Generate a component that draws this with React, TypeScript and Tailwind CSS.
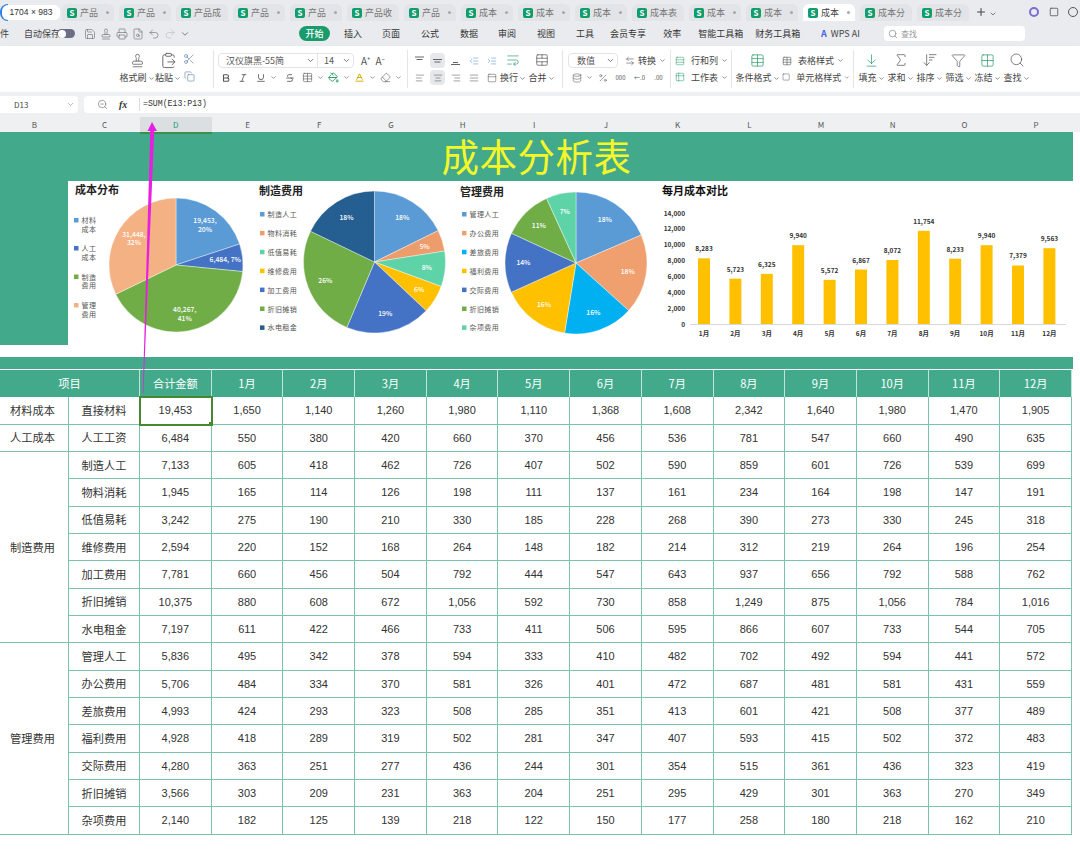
import {
  AlignCenter,
  AlignJustify,
  AlignLeft,
  AlignRight,
  ArrowDownToLine,
  ArrowDownWideNarrow,
  ArrowLeftRight,
  Baseline,
  Bold,
  ChevronDown,
  ClipboardPaste,
  Copy,
  Database,
  Eraser,
  Filter,
  FileSearch,
  Grid2x2,
  IndentDecrease,
  IndentIncrease,
  Italic,
  PaintBucket,
  PanelTop,
  Percent,
  Plus,
  Printer,
  Redo2,
  Rows3,
  Save,
  Scissors,
  Search,
  Sigma,
  Square,
  Stamp,
  Strikethrough,
  Table,
  Table2,
  TableCellsMerge,
  Underline,
  Undo2,
  WrapText,
  ZoomOut,
} from "lucide-react";
import type { ReactNode } from "react";

const tabs = [
  "产品",
  "产品",
  "产品成",
  "产品",
  "产品",
  "产品收",
  "产品",
  "成本",
  "成本",
  "成本",
  "成本表",
  "成本",
  "成本",
  "成本",
  "成本分",
  "成本分",
];

const menus = [
  { label: "插入", cls: "" },
  { label: "页面", cls: "ml-[20px]" },
  { label: "公式", cls: "ml-[21px]" },
  { label: "数据", cls: "ml-[21px]" },
  { label: "审阅", cls: "ml-[20px]" },
  { label: "视图", cls: "ml-[21px]" },
  { label: "工具", cls: "ml-[21px]" },
  { label: "会员专享", cls: "ml-[16px]" },
  { label: "效率", cls: "ml-[17px]" },
  { label: "智能工具箱", cls: "ml-[17px]" },
  { label: "财务工具箱", cls: "ml-[12px]" },
];

const columnLetters = ["B", "C", "D", "E", "F", "G", "H", "I", "J", "K", "L", "M", "N", "O", "P"];
const months = ["1月", "2月", "3月", "4月", "5月", "6月", "7月", "8月", "9月", "10月", "11月", "12月"];

const rows: { group?: string; span?: number; name: string; values: string[] }[] = [
  { group: "材料成本", span: 1, name: "直接材料", values: ["19,453", "1,650", "1,140", "1,260", "1,980", "1,110", "1,368", "1,608", "2,342", "1,640", "1,980", "1,470", "1,905"] },
  { group: "人工成本", span: 1, name: "人工工资", values: ["6,484", "550", "380", "420", "660", "370", "456", "536", "781", "547", "660", "490", "635"] },
  { group: "制造费用", span: 7, name: "制造人工", values: ["7,133", "605", "418", "462", "726", "407", "502", "590", "859", "601", "726", "539", "699"] },
  { name: "物料消耗", values: ["1,945", "165", "114", "126", "198", "111", "137", "161", "234", "164", "198", "147", "191"] },
  { name: "低值易耗", values: ["3,242", "275", "190", "210", "330", "185", "228", "268", "390", "273", "330", "245", "318"] },
  { name: "维修费用", values: ["2,594", "220", "152", "168", "264", "148", "182", "214", "312", "219", "264", "196", "254"] },
  { name: "加工费用", values: ["7,781", "660", "456", "504", "792", "444", "547", "643", "937", "656", "792", "588", "762"] },
  { name: "折旧摊销", values: ["10,375", "880", "608", "672", "1,056", "592", "730", "858", "1,249", "875", "1,056", "784", "1,016"] },
  { name: "水电租金", values: ["7,197", "611", "422", "466", "733", "411", "506", "595", "866", "607", "733", "544", "705"] },
  { group: "管理费用", span: 7, name: "管理人工", values: ["5,836", "495", "342", "378", "594", "333", "410", "482", "702", "492", "594", "441", "572"] },
  { name: "办公费用", values: ["5,706", "484", "334", "370", "581", "326", "401", "472", "687", "481", "581", "431", "559"] },
  { name: "差旅费用", values: ["4,993", "424", "293", "323", "508", "285", "351", "413", "601", "421", "508", "377", "489"] },
  { name: "福利费用", values: ["4,928", "418", "289", "319", "502", "281", "347", "407", "593", "415", "502", "372", "483"] },
  { name: "交际费用", values: ["4,280", "363", "251", "277", "436", "244", "301", "354", "515", "361", "436", "323", "419"] },
  { name: "折旧摊销", values: ["3,566", "303", "209", "231", "363", "204", "251", "295", "429", "301", "363", "270", "349"] },
  { name: "杂项费用", values: ["2,140", "182", "125", "139", "218", "122", "150", "177", "258", "180", "218", "162", "210"] },
];

type Slice = { value: number; color: string; label: string[] };

function Pie({ cx, cy, r, slices }: { cx: number; cy: number; r: number; slices: Slice[] }) {
  const total = slices.reduce((sum, s) => sum + s.value, 0);
  let angle = 0;

  return (
    <g>
      {slices.map((s) => {
        const start = angle;
        angle += (s.value / total) * Math.PI * 2;
        const mid = (start + angle) / 2;
        const large = angle - start > Math.PI ? 1 : 0;
        const x1 = cx + r * Math.sin(start);
        const y1 = cy - r * Math.cos(start);
        const x2 = cx + r * Math.sin(angle);
        const y2 = cy - r * Math.cos(angle);
        const lx = cx + r * 0.74 * Math.sin(mid);
        const ly = cy - r * 0.74 * Math.cos(mid);
        return (
          <g key={s.color + s.value}>
            <path d={`M${cx} ${cy}L${x1} ${y1}A${r} ${r} 0 ${large} 1 ${x2} ${y2}Z`} fill={s.color} stroke="#fff" strokeWidth="0.4" />
            {s.label.map((line, i) => (
              <text
                key={line}
                x={lx}
                y={ly + 2.5 + (i - (s.label.length - 1) / 2) * 8.5}
                textAnchor="middle"
                fontSize="6.8"
                fontWeight="500"
                fill="#fff"
              >
                {line}
              </text>
            ))}
          </g>
        );
      })}
    </g>
  );
}

function Legend({ x, items }: { x: number; items: { color: string; y: number; lines: string[] }[] }) {
  return (
    <g>
      {items.map((item) => (
        <g key={item.lines.join("")}>
          <rect x={x} y={item.y - 3} width="4.5" height="4.5" fill={item.color} />
          {item.lines.map((line, i) => (
            <text key={line} x={x + 7.5} y={item.y + 2 + i * 8.5} fontSize="7" letterSpacing="0.4" fill="#555">
              {line}
            </text>
          ))}
        </g>
      ))}
    </g>
  );
}

function CostCharts() {
  const bars = [8283, 5723, 6325, 9940, 5572, 6867, 8072, 11754, 8233, 9940, 7379, 9563];
  const labels = ["8,283", "5,723", "6,325", "9,940", "5,572", "6,867", "8,072", "11,754", "8,233", "9,940", "7,379", "9,563"];
  const axis = [14000, 12000, 10000, 8000, 6000, 4000, 2000, 0];
  const scale = 111 / 14000;

  const mfgNames = ["制造人工", "物料消耗", "低值易耗", "维修费用", "加工费用", "折旧摊销", "水电租金"];
  const mfgColors = ["#5b9bd5", "#ed9c6b", "#5fd3a8", "#ffc000", "#4472c4", "#70ad47", "#255e91"];
  const mgtNames = ["管理人工", "办公费用", "差旅费用", "福利费用", "交际费用", "折旧摊销", "杂项费用"];
  const mgtColors = ["#5b9bd5", "#f0a06e", "#00b0f0", "#ffc000", "#4472c4", "#70ad47", "#5fd3a8"];

  return (
    <svg width="1005" height="164" viewBox="68 181 1005 164" className="block">
      <text x="75" y="194" fontSize="11" fontWeight="700" fill="#222">成本分布</text>
      <Legend
        x={74}
        items={[
          { color: "#5b9bd5", y: 221, lines: ["材料", "成本"] },
          { color: "#4472c4", y: 249, lines: ["人工", "成本"] },
          { color: "#70ad47", y: 277.5, lines: ["制造", "费用"] },
          { color: "#f4b183", y: 306, lines: ["管理", "费用"] },
        ]}
      />
      <Pie
        cx={176}
        cy={265}
        r={67}
        slices={[
          { value: 19453, color: "#5b9bd5", label: ["19,453,", "20%"] },
          { value: 6484, color: "#4472c4", label: ["6,484, 7%"] },
          { value: 40267, color: "#70ad47", label: ["40,267,", "41%"] },
          { value: 31448, color: "#f4b183", label: ["31,448,", "32%"] },
        ]}
      />

      <text x="259" y="195" fontSize="11" fontWeight="700" fill="#222">制造费用</text>
      <Legend x={260} items={mfgNames.map((n, i) => ({ color: mfgColors[i], y: 215 + i * 18.9, lines: [n] }))} />
      <Pie
        cx={374.5}
        cy={262}
        r={71}
        slices={[
          { value: 7133, color: mfgColors[0], label: ["18%"] },
          { value: 1945, color: mfgColors[1], label: ["5%"] },
          { value: 3242, color: mfgColors[2], label: ["8%"] },
          { value: 2594, color: mfgColors[3], label: ["6%"] },
          { value: 7781, color: mfgColors[4], label: ["19%"] },
          { value: 10375, color: mfgColors[5], label: ["26%"] },
          { value: 7197, color: mfgColors[6], label: ["18%"] },
        ]}
      />

      <text x="460" y="196" fontSize="11" fontWeight="700" fill="#222">管理费用</text>
      <Legend x={462} items={mgtNames.map((n, i) => ({ color: mgtColors[i], y: 215 + i * 18.9, lines: [n] }))} />
      <Pie
        cx={576}
        cy={263}
        r={71}
        slices={[
          { value: 5836, color: mgtColors[0], label: ["18%"] },
          { value: 5706, color: mgtColors[1], label: ["18%"] },
          { value: 4993, color: mgtColors[2], label: ["16%"] },
          { value: 4928, color: mgtColors[3], label: ["16%"] },
          { value: 4280, color: mgtColors[4], label: ["14%"] },
          { value: 3566, color: mgtColors[5], label: ["11%"] },
          { value: 2140, color: mgtColors[6], label: ["7%"] },
        ]}
      />

      <text x="662" y="195" fontSize="11" fontWeight="700" fill="#111">每月成本对比</text>
      {axis.map((v) => (
        <text key={v} x="685" y={324 + 2.5 - v * scale} textAnchor="end" fontSize="6.5" fontWeight="600" fill="#333">
          {v.toLocaleString("en-US")}
        </text>
      ))}
      <line x1="690" x2="1066" y1="324.5" y2="324.5" stroke="#d9d9d9" />
      {bars.map((v, i) => {
        const x = 704 + i * 31.4;
        const h = v * scale;
        return (
          <g key={months[i]}>
            <rect x={x - 6} y={324 - h} width="12" height={h} fill="#ffc000" />
            <text x={x} y={324 - h - 7} textAnchor="middle" fontSize="6.5" fontWeight="600" fill="#333">{labels[i]}</text>
            <text x={x} y={336} textAnchor="middle" fontSize="6.5" fontWeight="700" fill="#333">{months[i]}</text>
          </g>
        );
      })}
    </svg>
  );
}

// top / middle / bottom cell alignment glyph
function VAlign({ at }: { at: "top" | "middle" | "bottom" }) {
  const y = at === "top" ? [2, 4.5] : at === "middle" ? [4.5, 7] : [9.5, 9.5];
  return (
    <svg width="11" height="11" viewBox="0 0 11 11" stroke="currentColor" strokeWidth="0.9">
      <line x1="1" x2="10" y1={y[0]} y2={y[0]} />
      {at === "bottom" ? <line x1="3" x2="8" y1="7.5" y2="7.5" /> : <line x1="2.5" x2="8.5" y1={y[1]} y2={y[1]} />}
    </svg>
  );
}

function Tool({ icon, label, w = "w-[30px]" }: { icon: ReactNode; label: string; w?: string }) {
  return (
    <div className={`flex h-full shrink-0 flex-col items-center justify-between pb-[8px] pt-[4px] ${w}`}>
      <div className="flex h-[20px] items-center text-[#555]">{icon}</div>
      <div className="flex h-[12px] items-center whitespace-nowrap text-[9px] leading-[12px] text-[#444]">
        {label}
        <ChevronDown size={7} className="ml-px" />
      </div>
    </div>
  );
}

function Small({ children, active = false, className = "" }: { children: ReactNode; active?: boolean; className?: string }) {
  return (
    <span className={`flex h-[15px] w-[15px] shrink-0 items-center justify-center rounded-sm text-[#555] ${active ? "bg-[#e6e8eb]" : ""} ${className}`}>
      {children}
    </span>
  );
}

function Divider() {
  return <div className="mx-[3px] h-[38px] w-px shrink-0 bg-[#e3e5e8]" />;
}

function Ribbon() {
  const caret = <ChevronDown size={7} className="shrink-0 text-[#555]" />;

  return (
    <div className="flex h-[46px] items-center bg-white pl-[122px] shadow-[0_1px_2px_#c9ccd0]">
      <Tool label="格式刷" icon={<Stamp size={15} strokeWidth={1.2} />} />
      <div className="ml-px h-full">
        <Tool label="粘贴" icon={<ClipboardPaste size={17} strokeWidth={1.2} />} />
      </div>
      <div className="mr-[15px] flex h-full w-[12px] flex-col items-center justify-between pb-[10px] pt-[7px] text-[#5f7fa8]">
        <Scissors size={12} strokeWidth={1.3} />
        <Copy size={11} strokeWidth={1.3} />
      </div>
      <Divider />

      {/* font */}
      <div className="flex w-[187px] flex-col gap-[2px] pl-[1px]">
        <div className="flex items-center">
          <div className="flex h-[15px] w-[136px] items-center rounded-sm border border-[#e2e4e7] text-[9px] text-[#555]">
            <span className="w-[87px] pl-[7px]">汉仪旗黑-55简</span>
            <ChevronDown size={9} />
            <span className="ml-[2px] border-l border-[#e2e4e7] pl-[6px]">14</span>
            <ChevronDown size={9} className="ml-auto mr-[2px]" />
          </div>
          <span className="ml-[7px] text-[10px] text-[#555]">A⁺</span>
          <span className="ml-[5px] text-[10px] text-[#555]">A⁻</span>
        </div>
        <div className="flex items-center gap-[2px]">
          <Small><Bold size={10} strokeWidth={2.5} /></Small>
          <Small><Italic size={10} /></Small>
          <Small className="ml-px"><Underline size={10} /></Small>
          {caret}
          <Small className="ml-[3px]"><Strikethrough size={10} /></Small>
          <Small className="ml-px"><Table size={11} strokeWidth={1.3} /></Small>
          {caret}
          <Small><PaintBucket size={11} className="text-[#1f9d55]" /></Small>
          {caret}
          <Small><Baseline size={11} className="text-[#d8a400]" /></Small>
          {caret}
          <Small><Eraser size={11} strokeWidth={1.3} /></Small>
          {caret}
        </div>
      </div>
      <Divider />

      {/* alignment */}
      <div className="flex w-[87px] flex-col gap-[2px] pl-[1px]">
        <div className="flex items-center gap-[3px]">
          <Small><VAlign at="top" /></Small>
          <Small active><VAlign at="middle" /></Small>
          <Small><VAlign at="bottom" /></Small>
          <Small><IndentDecrease size={10} strokeWidth={1.3} className="text-[#4d8fc7]" /></Small>
          <Small><IndentIncrease size={10} strokeWidth={1.3} className="text-[#4d8fc7]" /></Small>
        </div>
        <div className="flex items-center gap-[3px]">
          <Small><AlignLeft size={10} strokeWidth={1.3} /></Small>
          <Small active><AlignCenter size={10} strokeWidth={1.3} /></Small>
          <Small><AlignRight size={10} strokeWidth={1.3} /></Small>
          <Small><AlignJustify size={10} strokeWidth={1.3} /></Small>
          <Small><PanelTop size={10} strokeWidth={1.3} /></Small>
        </div>
      </div>
      <Tool label="换行" icon={<WrapText size={14} strokeWidth={1.2} className="text-[#2f9d6f]" />} />
      <div className="mr-[4px] h-full">
        <Tool label="合并" icon={<TableCellsMerge size={14} strokeWidth={1.2} />} w="w-[27px]" />
      </div>
      <Divider />

      {/* number */}
      <div className="flex w-[101px] flex-col gap-[2px] pl-[2px]">
        <div className="flex items-center gap-[7px]">
          <div className="flex h-[15px] w-[50px] shrink-0 items-center justify-between rounded-sm border border-[#e2e4e7] pl-[8px] pr-[2px] text-[9px] text-[#555]">
            数值
            <ChevronDown size={9} />
          </div>
          <span className="flex items-center gap-[3px] whitespace-nowrap text-[9px] text-[#444]">
            <ArrowLeftRight size={10} strokeWidth={1.3} />
            转换
            <ChevronDown size={7} />
          </span>
        </div>
        <div className="ml-px flex items-center gap-[2px]">
          <Small><Database size={10} strokeWidth={1.3} /></Small>
          {caret}
          <Small><Percent size={10} strokeWidth={1.3} /></Small>
          <span className="w-[17px] text-center text-[6px] text-[#555]">000</span>
          <span className="w-[17px] text-center text-[6px] text-[#555]">←.0</span>
          <span className="w-[17px] text-center text-[6px] text-[#555]">.00</span>
        </div>
      </div>
      <Divider />

      <div className="flex w-[54px] flex-col gap-[3px] pl-[1px] text-[9px] text-[#444]">
        <span className="flex items-center gap-[6px] whitespace-nowrap"><Rows3 size={10} strokeWidth={1.3} className="text-[#2f9d6f]" />行和列<ChevronDown size={7} className="-ml-[3px]" /></span>
        <span className="flex items-center gap-[6px] whitespace-nowrap"><Table2 size={10} strokeWidth={1.3} className="text-[#2f9d6f]" />工作表<ChevronDown size={7} className="-ml-[3px]" /></span>
      </div>
      <Divider />

      <Tool label="条件格式" icon={<Table size={15} strokeWidth={1.2} className="text-[#2f9d6f]" />} w="w-[45px]" />
      <div className="ml-px flex w-[69px] flex-col gap-[3px] pl-[1px] text-[9px] text-[#444]">
        <span className="flex items-center gap-[6px] whitespace-nowrap"><Table size={10} strokeWidth={1.3} />表格样式<ChevronDown size={7} className="-ml-[3px]" /></span>
        <span className="flex items-center gap-[6px] whitespace-nowrap"><Square size={10} strokeWidth={1.3} />单元格样式<ChevronDown size={7} className="-ml-[3px]" /></span>
      </div>
      <Divider />

      <Tool label="填充" icon={<ArrowDownToLine size={15} strokeWidth={1.2} className="text-[#2f9d6f]" />} w="w-[29px]" />
      <Tool label="求和" icon={<Sigma size={16} strokeWidth={1.1} />} w="w-[29px]" />
      <Tool label="排序" icon={<ArrowDownWideNarrow size={16} strokeWidth={1.1} />} w="w-[29px]" />
      <Tool label="筛选" icon={<Filter size={15} strokeWidth={1.1} />} w="w-[29px]" />
      <Tool label="冻结" icon={<Grid2x2 size={15} strokeWidth={1.2} className="text-[#2f9d6f]" />} w="w-[29px]" />
      <Tool label="查找" icon={<Search size={16} strokeWidth={1.1} />} w="w-[29px]" />
    </div>
  );
}

export default function App() {
  return (
    <div className="relative h-[860px] w-[1080px] overflow-hidden bg-white font-['Noto_Sans_CJK_SC','Noto_Sans',sans-serif]">
      <div className="bg-[#e9ebee]">
        {/* tab strip */}
        <div className="flex h-[21px] items-end pl-[62px]">
          {tabs.map((tab, i) => (
            <div
              key={i}
              className={`mr-[5px] flex h-[17px] w-[52px] shrink-0 items-center gap-[3px] overflow-hidden rounded-t-md pl-[5px] text-[9px] ${
                i === 13 ? "bg-white text-[#444]" : "bg-[#e2e4e7] text-[#777]"
              }`}
            >
              <span className="flex h-[10px] w-[10px] shrink-0 items-center justify-center rounded-[2px] bg-[#0f9d6b] text-[8px] font-bold leading-none text-white">
                S
              </span>
              <span className="whitespace-nowrap">{tab}</span>
              {tab.length < 3 ? <span className="ml-[5px] h-[3px] w-[3px] shrink-0 rounded-full bg-[#aaa]" /> : null}
            </div>
          ))}
          <Plus size={12} className="mb-[3px] ml-[1px] shrink-0 text-[#444]" />
          <ChevronDown size={8} className="mb-[3px] ml-[2px] shrink-0 text-[#444]" />
          <span className="mb-[4px] ml-[32px] h-[10px] w-[10px] shrink-0 rounded-full border-2 border-[#7a6fd0]" />
          <Square size={10} className="mb-[4px] ml-[10px] shrink-0 text-[#555]" />
          <span className="mb-[4px] ml-[9px] h-[10px] w-[10px] shrink-0 rounded-full border border-[#555]" />
        </div>

        {/* quick access + menu */}
        <div className="flex h-[25px] items-center text-[9px] text-[#444]">
          <span className="w-[24px]">件</span>
          <span className="w-[33px] whitespace-nowrap">自动保存</span>
          <span className="flex h-[9px] w-[18px] items-center rounded-full bg-[#6a6f86]">
            <span className="ml-px h-[8px] w-[8px] rounded-full bg-white" />
          </span>
          <div className="ml-[9px] flex w-[110px] items-center gap-[4px] text-[#666]">
            <Save size={12} strokeWidth={1.2} />
            <Stamp size={12} strokeWidth={1.2} />
            <Printer size={12} strokeWidth={1.2} />
            <FileSearch size={12} strokeWidth={1.2} />
            <Undo2 size={12} strokeWidth={1.2} />
            <Redo2 size={12} strokeWidth={1.2} className="text-[#bbb]" />
            <ChevronDown size={10} />
          </div>
          <span className="ml-[105px] flex h-[15px] w-[31px] items-center justify-center rounded-full bg-[#1a9b6c] text-[9px] font-medium text-white">
            开始
          </span>
          <div className="ml-[14px] flex w-[457px] shrink-0 items-center whitespace-nowrap text-[9px] text-[#333]">
            {menus.map((m) => (
              <span key={m.label} className={m.cls}>{m.label}</span>
            ))}
          </div>
          <span className="ml-[20px] flex w-[43px] shrink-0 items-center gap-[4px] whitespace-nowrap text-[#444]">
            <span className="font-bold text-[#4a5ee8]">A</span>WPS AI
          </span>
          <div className="ml-[20px] flex h-[15px] w-[141px] items-center gap-[3px] rounded-sm bg-white pl-[4px] text-[8px] text-[#999]">
            <Search size={10} />
            查找
          </div>
        </div>

        <Ribbon />

        {/* formula bar */}
        <div className="flex h-[25px] items-center gap-[6px] bg-[#eef0f2]">
          <div className="flex h-[17px] w-[78px] items-center justify-between rounded-r-sm bg-white pl-[14px] pr-[3px] text-[8px] text-[#444]">
            D13
            <ChevronDown size={9} className="text-[#999]" />
          </div>
          <div className="flex h-[17px] flex-1 items-center rounded-l-sm bg-white pl-[13px] text-[9px] text-[#333]">
            <ZoomOut size={11} strokeWidth={1.3} className="text-[#666]" />
            <span className="ml-[11px] w-[20px] font-['Liberation_Serif',serif] text-[10px] font-bold italic">fx</span>
            <span className="border-l border-[#ddd] pl-[3px] font-['Liberation_Mono',monospace] text-[8.2px]">=SUM(E13:P13)</span>
          </div>
        </div>
      </div>

      {/* column letters */}
      <div className="grid h-[15px] grid-cols-[69px_71px_repeat(13,71.7px)] bg-[#eef0f2] text-[8px] leading-[15px] text-[#555]">
        {columnLetters.map((c) => (
          <div key={c} className={`text-center ${c === "D" ? "border-b-2 border-[#3f8f4a] bg-[#dcdfe2] text-[#1a9b6c]" : ""}`}>
            {c}
          </div>
        ))}
      </div>

      {/* dashboard */}
      <div className="w-[1073px] bg-[#42aa8b]">
        <div className="flex h-[49px] items-center justify-center pb-[4px] text-[37.5px] leading-none tracking-[0.5px] text-[#f4f62a]">
          成本分析表
        </div>
        <div className="flex h-[164px]">
          <div className="w-[68px] shrink-0" />
          <div className="bg-white">
            <CostCharts />
          </div>
        </div>
      </div>
      <div className="h-[12px] bg-white" />
      <div className="h-[12px] w-[1073px] bg-[#42aa8b]" />
      <div className="h-px bg-white" />

      {/* cost table */}
      <div className="grid w-[1073px] auto-rows-[27.33px] grid-cols-[69px_71px_repeat(13,71.7px)] text-[11.2px] text-[#333]">
        <div className="col-span-2 flex h-[27px] items-center justify-center border-r border-[#bfe3d6] bg-[#42aa8b] text-white">
          项目
        </div>
        <div className="flex h-[27px] items-center justify-center border-r border-[#bfe3d6] bg-[#42aa8b] text-white">合计金额</div>
        {months.map((m) => (
          <div key={m} className="flex h-[27px] items-center justify-center border-r border-[#bfe3d6] bg-[#42aa8b] text-white">
            {m}
          </div>
        ))}

        {rows.map((row) => (
          <div key={row.name + row.values[0]} className="contents">
            {row.group ? (
              <div
                className={`flex items-center justify-center border-b border-r border-[#79c3a9] pr-[3px] ${
                  row.span === 7 ? "row-span-7" : ""
                }`}
              >
                {row.group}
              </div>
            ) : null}
            <div className="flex items-center justify-center border-b border-r border-[#79c3a9]">{row.name}</div>
            {row.values.map((value, i) => (
              <div
                key={i}
                className={`relative flex items-center justify-center border-b border-r border-[#79c3a9] font-['Liberation_Sans',sans-serif] text-[11px] ${
                  value === "19,453" ? "z-10 outline-2 -outline-offset-1 outline-[#47892f]" : ""
                }`}
              >
                {value}
                {value === "19,453" ? (
                  <span className="absolute -bottom-[2px] -right-[2px] h-[4px] w-[4px] bg-[#47892f]" />
                ) : null}
              </div>
            ))}
          </div>
        ))}
      </div>

      {/* pink annotation arrow */}
      <svg width="1080" height="860" className="pointer-events-none absolute left-0 top-0 z-20">
        <polygon points="152,122 157,131 154.2,131 143.3,394 142.7,394 150.3,131 147.5,131" fill="#e81fe0" />
      </svg>

      {/* screenshot size pill */}
      <div className="absolute left-0 top-[4px] h-[17px] w-[8px] rounded-l-full bg-[#2f7fe0]" />
      <div className="absolute left-[2px] top-[5px] flex h-[15px] w-[58px] items-center justify-center rounded-md bg-white font-['Liberation_Sans',sans-serif] text-[8.5px] text-[#333]">
        1704 × 983
      </div>
    </div>
  );
}
